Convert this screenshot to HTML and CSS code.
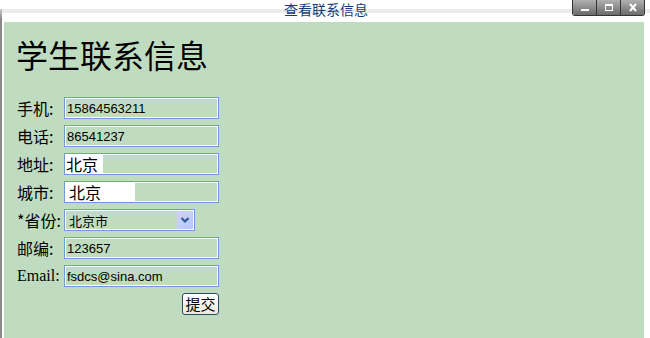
FILE: index.html
```html
<!DOCTYPE html>
<html lang="zh-CN">
<head>
    <meta charset="UTF-8">
    <title>查看联系信息</title>
    <link rel="stylesheet" href="styles.css">
</head>
<body>
    <div class="window">
        <div class="titlebar">
            <span></span>
            <span class="title">查看联系信息</span>
            <div class="controls">
                <span class="ctl"><svg width="12" height="10" viewBox="0 0 12 10"><rect x="2" y="6" width="8" height="2" fill="#fff"/></svg></span>
                <span class="ctl"><svg width="12" height="10" viewBox="0 0 12 10"><rect x="2.5" y="1.5" width="7" height="6" fill="none" stroke="#fff" stroke-width="1"/><rect x="2" y="1" width="8" height="2" fill="#fff"/></svg></span>
                <span class="ctl"><svg width="12" height="10" viewBox="0 0 12 10"><path d="M3 1 L9 8 M9 1 L3 8" stroke="#fff" stroke-width="2"/></svg></span>
            </div>
        </div>

        <div class="content">
            <h1>学生联系信息</h1>

            <form class="contact-form">
                <label>手机:</label>
                <input type="text" value="15864563211">

                <label>电话:</label>
                <input type="text" value="86541237">

                <label>地址:</label>
                <input type="text" class="addr" value="北京">

                <label>城市:</label>
                <input type="text" class="city" value="北京">

                <label>*省份:</label>
                <div class="select-box">
                    <select>
                        <option>北京市</option>
                    </select>
                    <span class="arrow"><svg width="10" height="8" viewBox="0 0 10 8"><path d="M1.5 2 L5 5.5 L8.5 2" fill="none" stroke="#2c5a96" stroke-width="2.2"/></svg></span>
                </div>

                <label>邮编:</label>
                <input type="text" value="123657">

                <label class="latin">Email:</label>
                <input type="text" value="fsdcs@sina.com">

                <button type="button" class="submit">提交</button>
            </form>
        </div>
    </div>
</body>
</html>
```
FILE: styles.css
```css
body {
    margin: 0;
    background: #fff;
    font-family: "Noto Sans CJK SC", "Liberation Sans", sans-serif;
}

.window {
    height: 338px;
    border-left: 2px solid #8a8a8a;
    border-image: linear-gradient(to bottom, #fff 0, #fff 10px, #c8c8c8 10px, #8a8a8a 20px) 1;
}

.titlebar {
    height: 22px;
    display: grid;
    grid-template-columns: 1fr auto 1fr;
    background: linear-gradient(to bottom, #fff 0, #fff 9px, #ececec 9px, #ececec 13px, #fff 13px);
}

.title {
    padding-top: 1px;
    font-size: 14px;
    line-height: 16px;
    color: #123c78;
}

.controls {
    justify-self: end;
    display: flex;
    height: 15px;
    margin-right: 5px;
    border: 1px solid #333;
    border-top: none;
    border-radius: 0 0 3px 3px;
    overflow: hidden;
}

.ctl {
    width: 23px;
    display: flex;
    align-items: center;
    justify-content: center;
    background: linear-gradient(to bottom, #b0b0b0, #6a6a6a);
    border-left: 1px solid #333;
}

.ctl:first-child {
    border-left: none;
}

.content {
    width: 640px;
    height: 316px;
    margin-left: 2px;
    box-sizing: border-box;
    padding: 12px 13px;
    background: #c0dcc0;
}

h1 {
    margin: 0 0 0 -1px;
    font-size: 32px;
    line-height: 40px;
    font-weight: normal;
    color: #000;
}

.contact-form {
    margin-top: 23px;
    display: grid;
    grid-template-columns: 47px 155px;
    grid-auto-rows: 22px;
    row-gap: 6px;
    align-items: center;
}

.contact-form label {
    font-size: 16px;
    line-height: 22px;
}

.contact-form label.latin {
    font-family: "Liberation Serif", serif;
    font-size: 16px;
}

.contact-form input {
    width: 155px;
    height: 22px;
    box-sizing: border-box;
    margin: 0;
    padding: 0 0 0 2px;
    border: 1px solid #6f9bd8;
    box-shadow: inset 0 0 0 1px #fff;
    background: transparent;
    font-family: "Liberation Sans", sans-serif;
    font-size: 13px;
    color: #000;
    outline: none;
}

.contact-form input.addr {
    padding-left: 1px;
    font-family: "Noto Sans CJK SC", sans-serif;
    font-size: 16px;
    background: linear-gradient(to right, #fff 38px, transparent 38px);
}

.contact-form input.city {
    padding-left: 4px;
    font-family: "Noto Sans CJK SC", sans-serif;
    font-size: 16px;
    background: linear-gradient(to right, #fff 70px, transparent 70px);
}

.select-box {
    width: 131px;
    height: 22px;
    box-sizing: border-box;
    display: flex;
    align-items: center;
    border: 1px solid #6f9bd8;
    box-shadow: inset 0 0 0 1px #fff;
}

.select-box select {
    flex: 1;
    min-width: 0;
    height: 18px;
    margin: 0 0 0 2px;
    padding: 0 0 0 2px;
    border: none;
    background: transparent;
    -webkit-appearance: none;
    appearance: none;
    font-family: "Noto Sans CJK SC", sans-serif;
    font-size: 13px;
    color: #000;
    outline: none;
}

.arrow {
    width: 16px;
    height: 18px;
    margin-right: 1px;
    display: flex;
    align-items: center;
    justify-content: center;
    border-radius: 3px;
    background: linear-gradient(135deg, #d4d0fa, #b4cbf2);
}

.submit {
    grid-column: 2;
    justify-self: end;
    width: 37px;
    height: 22px;
    padding: 0;
    border: 1px solid #2b4a6a;
    border-radius: 3px;
    background: linear-gradient(to bottom, #fff, #ece9e0);
    font-family: "Noto Sans CJK SC", sans-serif;
    font-size: 15px;
    line-height: 18px;
    color: #000;
    cursor: pointer;
}
```
